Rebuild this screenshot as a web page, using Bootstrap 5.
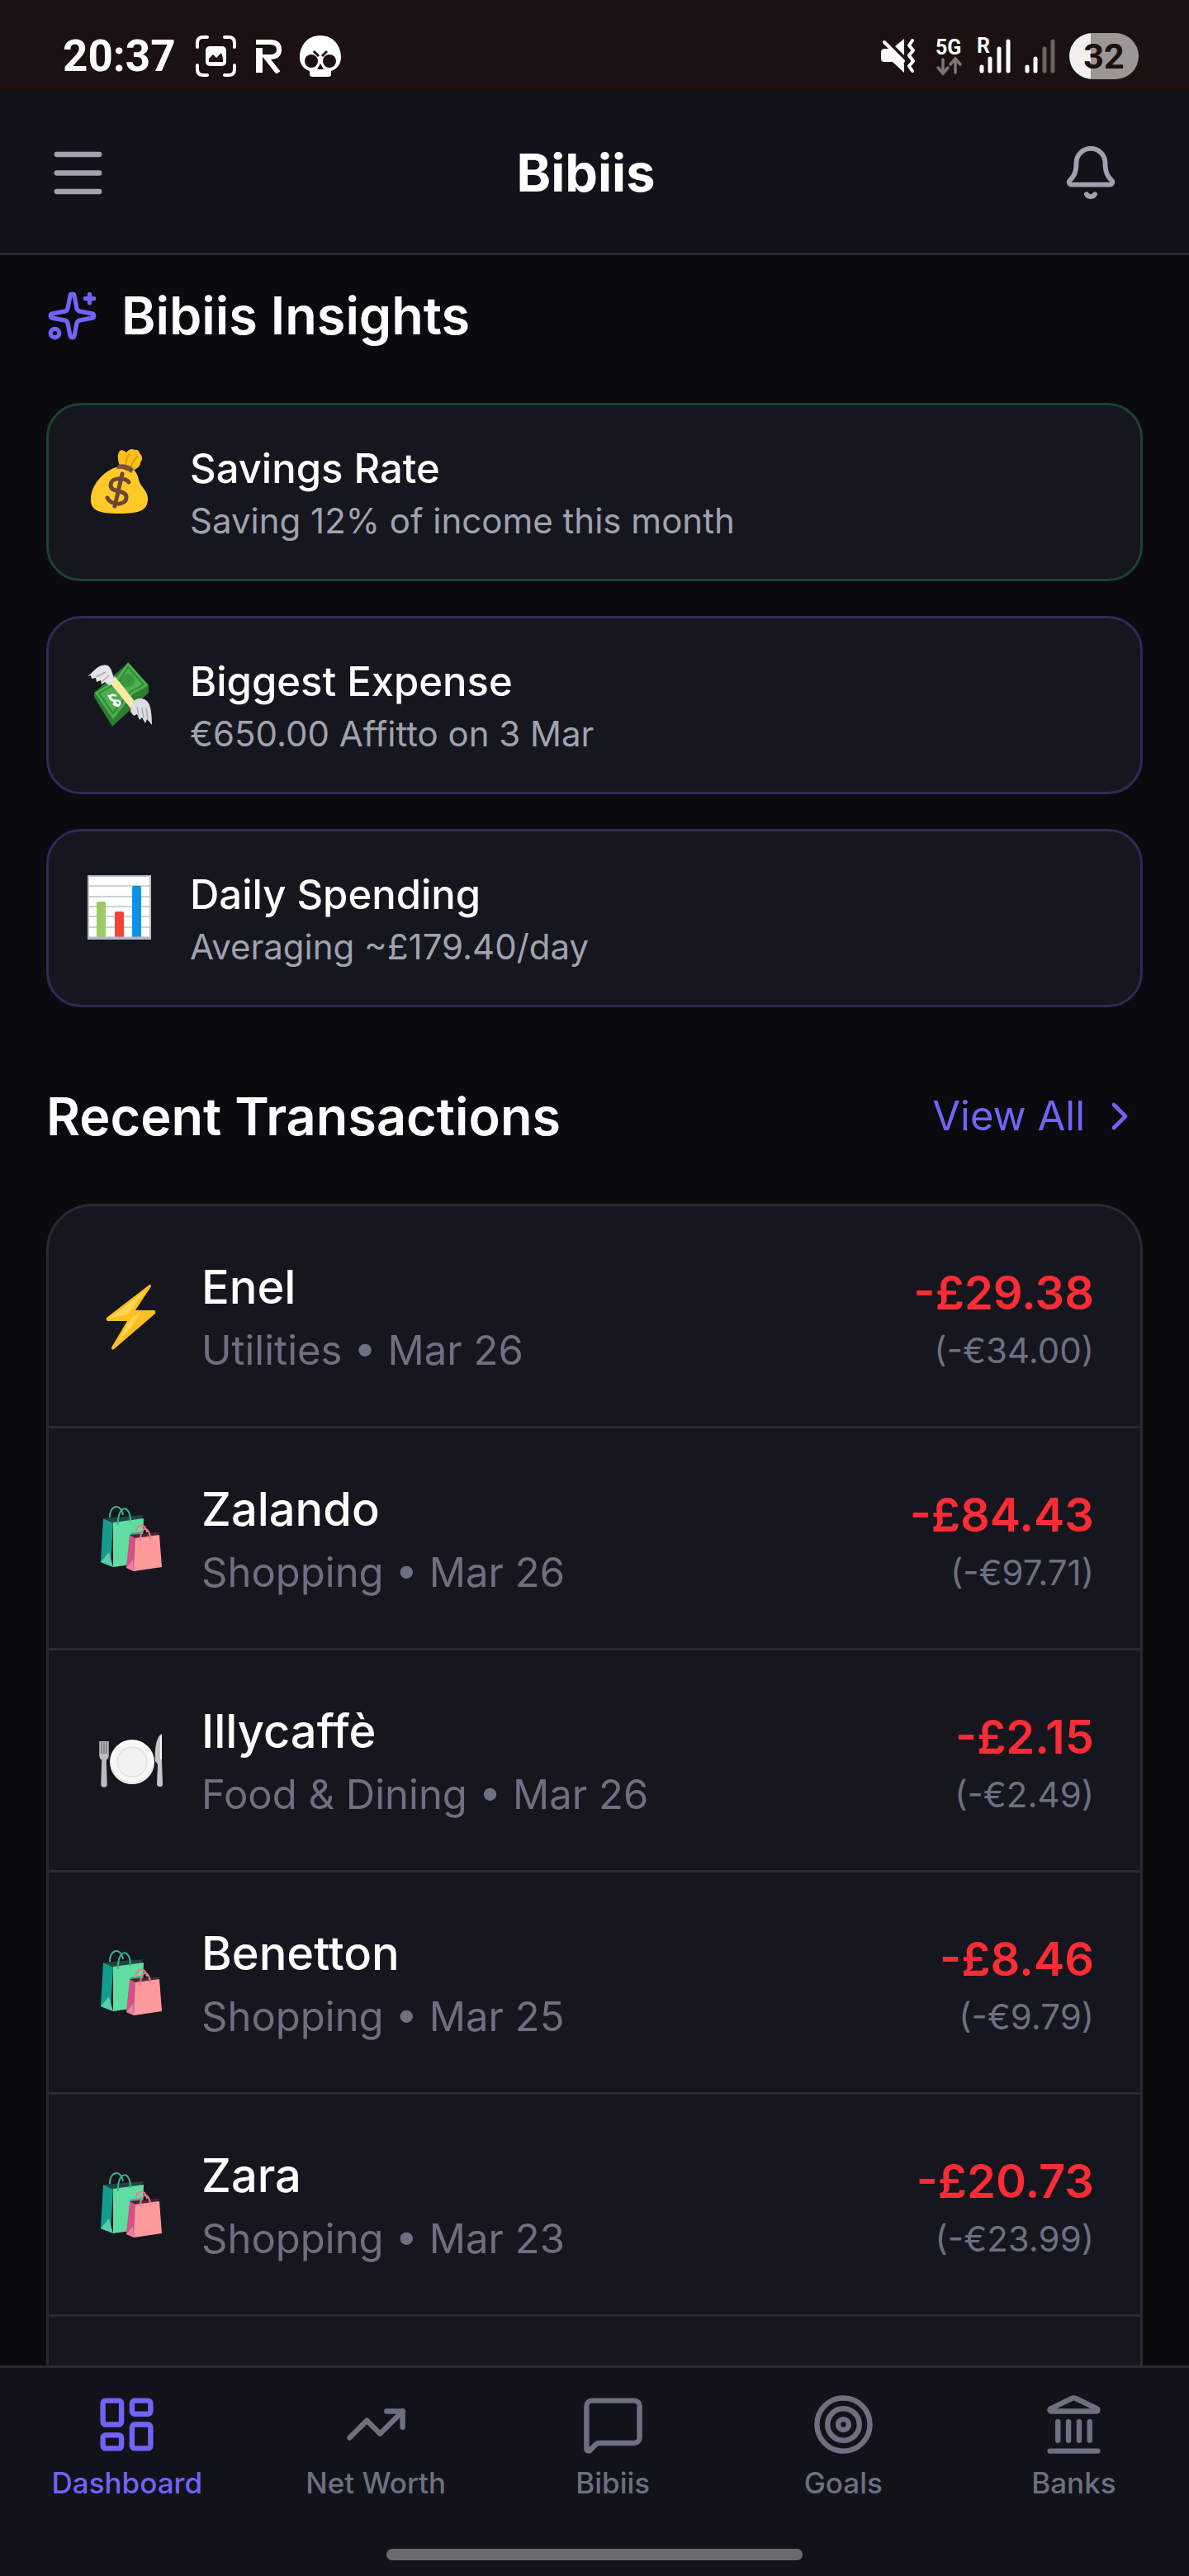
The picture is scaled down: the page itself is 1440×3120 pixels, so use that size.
<!DOCTYPE html>
<html lang="en">
<head>
<meta charset="utf-8">
<meta name="viewport" content="width=device-width, initial-scale=1">
<title>Bibiis</title>
<link href="https://cdn.jsdelivr.net/npm/bootstrap@5.3.0/dist/css/bootstrap.min.css" rel="stylesheet">
<style>
  :root { --page:#0a0a0f; --bar:#12131a; --panel:#16161e; --line:#2a2a34; --brand:#7064f7; --soft:#a0a2af; --dim:#6d7080; --loss:#fb2c36; }
  body { background:var(--page); color:#fff; font-family:Inter, "Liberation Sans", sans-serif; }
  svg { display:block; flex-shrink:0; }
  .stroke-icon { fill:none; stroke:currentColor; stroke-width:2; stroke-linecap:round; stroke-linejoin:round; }
  .status-bar { background:#1a1110; height:112px; padding:24px 61px 0 76px; font-family:Roboto, sans-serif; }
  .clock { font-size:53px; line-height:56px; font-weight:700; }
  .skull-icon { margin-left:20px; }
  .battery-pill { width:84px; height:56px; font-size:43px; line-height:56px; font-weight:700; color:#1a1110; background:linear-gradient(90deg,#f1f0f0 26px,#9c9695 26px); }
  .top-bar { background:var(--bar); border-bottom:3px solid var(--line); height:197px; padding:0 56px; }
  .bar-btn { background:none; border:0; padding:0; color:var(--soft); }
  .menu-btn { width:105px; }
  .bell-btn { padding:28px; }
  .bar-title { font-size:63px; line-height:90px; font-weight:700; }
  .feed { padding:28px 56px 0; min-height:0; scrollbar-width:none; }
  .section-title { font-size:63px; line-height:90px; font-weight:600; }
  .section-head { margin-bottom:61px; }
  .recent-head { margin-top:87px; }
  .brand-ink { color:var(--brand); }
  .insight-list { gap:42px; }
  .insight { --bs-card-border-radius:42px; --bs-card-bg:var(--panel); --bs-card-border-width:3px; --bs-card-border-color:#2f2a55; --bs-card-color:#fff; flex-direction:row; gap:42px; padding:42px; }
  .insight-good { --bs-card-border-color:#1a4331; }
  .insight-icon { margin-top:7px; }
  .insight-title { font-size:49px; line-height:70px; font-weight:500; }
  .insight-text { font-size:42px; line-height:56px; color:var(--soft); }
  .view-link { font-size:49px; line-height:70px; gap:14px; color:var(--brand); }
  .tx-panel { --bs-list-group-bg:var(--panel); --bs-list-group-color:#fff; background:var(--panel); border:3px solid var(--line); border-bottom:0; border-radius:56px 56px 0 0; }
  .tx-row { border:0; border-bottom:3px solid var(--line); background:none; padding:56px; gap:42px; }
  .tx-name { font-size:56px; line-height:84px; font-weight:500; }
  .tx-meta { font-size:49px; line-height:70px; color:var(--dim); }
  .tx-amount { font-size:56px; line-height:84px; font-weight:600; color:var(--loss); }
  .tx-orig { font-size:42px; line-height:56px; color:var(--dim); }
  .tab-bar { background:var(--bar); border-top:3px solid var(--line); padding:30px 0 19px; }
  .tab-item { min-width:210px; padding:0 28px; gap:7px; font-size:35px; line-height:50px; font-weight:500; color:var(--dim); }
  .tab-item.active { color:var(--brand); }
  .home-pill { width:35%; height:14px; background:#6b6a6f; margin:55px auto 0; }
</style>
</head>
<body>
<svg width="0" height="0" class="position-absolute" aria-hidden="true">
  <symbol id="em-bag" viewBox="0 0 87 87">
    <path d="M44 24C41 16 41 10 44 6c3-2 6 0 8 2 3-4 7-5 10-3 3-1 6 1 6 4 4 3 4 8 1 11 1 4-5 8-10 11z" fill="#fdc01c"/>
    <path d="M56 9c-3 5-5 10-5 16M66 12c-4 5-8 9-9 15" stroke="#e59a00" stroke-width="2" fill="none"/>
    <path d="M43 25c-15 3-34 20-34 40 0 13 9 17 34 17 24 0 35-3 35-18 0-10-9-14-11-23-1-6-4-12-10-14z" fill="#ffca28"/>
    <path d="M42 23c6-2 14 0 19 5l-3 5c-5-4-12-6-18-5z" fill="#7a5240"/>
    <path d="M55 44c-4-5-21-7-22 3-1 11 20 5 19 16-1 10-19 9-23 0M47 34 38 73" stroke="#6d4534" stroke-width="5" fill="none" stroke-linecap="round"/>
  </symbol>
  <symbol id="em-wings" viewBox="0 0 87 87">
    <path d="M54 5 79 33v8L35 82 13 46v-5z" fill="#2e7d32"/>
    <path d="M54 4 79 32 60 43 36 73 14 41 38 26z" fill="#4caf50"/>
    <path d="M54 10 73 31 57 40 36 66 19 42 41 29z" fill="none" stroke="#2e8b36" stroke-width="2"/>
    <ellipse cx="53" cy="26" rx="9" ry="8" fill="#3b9440"/>
    <path d="M38 21 61 50l-2 12L33 30z" fill="#ffe9a5"/>
    <path d="m30 44 13 14M40 45c-6-3-10 0-7 4s9-1 11 3-4 7-8 2" fill="none" stroke="#fff" stroke-width="2.500"/>
    <path d="M5 21C13 16 18 5 29 8c5 2 7 12 9 20l-7 4-5-4-4 3-1-5-5 2-1-5-5 1-1-4z" fill="#e4e5e8"/>
    <path d="M57 64c1-10 3-15 11-16 10 0 15 6 15 32l-6-7-2 5-4-7-3 3-3-7-4 2z" fill="#dcdde2"/>
    <path d="m15 22 12-6m-5 12 9-8M67 69l-2-11m8 14-2-13m7 14-2-13" stroke="#a9adb5" stroke-width="1.500" fill="none"/>
  </symbol>
  <symbol id="em-chart" viewBox="0 0 87 87">
    <path d="M5 4h77v78H5z" fill="#fff"/>
    <path d="M5 17h77M5 30h77M5 42h77M5 54h77M5 67h77" stroke="#cbd2d8" stroke-width="2"/>
    <path d="M6 5h75v76H6z" fill="none" stroke="#b4bec8" stroke-width="2"/>
    <path d="M16 80V38q0-2 2-2h7q2 0 2 2v42z" fill="#9ccc65"/>
    <path d="M38 80V50q0-2 2-2h7q2 0 2 2v30z" fill="#f44336"/>
    <path d="M59 80V19q0-2 2-2h7q2 0 2 2v61z" fill="#0c91eb"/>
    <path d="M5 80h77" stroke="#b0bac3" stroke-width="3"/>
  </symbol>
  <symbol id="em-bolt" viewBox="0 0 87 87">
    <path d="M66 5 14 45q-1 4 2 4h23L20 81q0 4 3 2L73 40q1-4-2-4H49L68 7q0-3-2-2z" fill="#fcbf21"/>
    <path d="M60 13 43 37q-1 3-5 4L17 46zM45 44l9-4-12 19-15 16z" fill="#ffe36b" opacity=".7"/>
  </symbol>
  <symbol id="em-shop" viewBox="0 0 87 87">
    <path d="m10 19 12 5-3 53L7 72z" fill="#159c8a"/>
    <path d="m10 19 49-4-4 6-33 4z" fill="#23433f"/>
    <path d="m22 24 37-5-2 54-35 5z" fill="#61dda2"/>
    <path d="M7 72 17 60l5 18z" fill="#5cc9b0"/>
    <path d="m43 37 14-2-2 42H38z" fill="#34a98a"/>
    <path d="M18 18C17 4 31-1 34 15M28 27C27 2 43 1 43 23" fill="none" stroke="#38b58d" stroke-width="2"/>
    <path d="m42 39 7 3-2 41-9-4z" fill="#d64f86"/>
    <path d="m42 39 36-3-3 5-26 2z" fill="#4c2737"/>
    <path d="m49 43 29-4 3 39-34 5z" fill="#ff9a9c"/>
    <path d="m38 79 8-10 1 14z" fill="#ea7f9f"/>
    <path d="M49 37c2-13 12-12 14-1M55 46c0-20 12-17 12-2" fill="none" stroke="#f0798c" stroke-width="2"/>
  </symbol>
  <symbol id="em-plate" viewBox="0 0 87 87">
    <path d="M6 20v17q0 4 3 5l-1 30q0 3 3 3t3-3l-1-30q3-1 3-5V20M9 20v16M13 20v16" fill="#b9bbbd" stroke="#b9bbbd" stroke-width="1.500"/>
    <path d="M8 21v14M11 21v14M14 21v14" stroke="#55585d" stroke-width="1"/>
    <path d="M81 11c-6 2-9 17-8 33l3 4-1 24q0 3 4 3 3 0 3-3l-1-28z" fill="#c5c6c8"/>
    <path d="M80 14v28" stroke="#f4f4f4" stroke-width="2"/>
    <circle cx="45" cy="45" r="27" fill="#f7f7f7"/>
    <circle cx="45" cy="45" r="18" fill="#f2f2f2" stroke="#e2e2e2" stroke-width="1.500"/>
    <path d="M20 52a26 26 0 0 0 50 0" fill="none" stroke="#e2e3e4" stroke-width="2"/>
  </symbol>
</svg>

<div class="vh-100 d-flex flex-column">
  <div class="status-bar d-flex align-items-center justify-content-between">
    <div class="d-flex align-items-center">
      <span class="clock">20:37</span>
      <svg class="ms-4" width="49" height="50" viewBox="0 0 49 50" aria-hidden="true"><path d="M2 14V9q0-7 7-7h5M35 2h5q7 0 7 7v5M47 36v5q0 7-7 7h-5M14 48H9q-7 0-7-7v-5" fill="none" stroke="#fff" stroke-width="4" stroke-linecap="round"/><rect x="12" y="13" width="25" height="24" rx="5" fill="#fff"/><path d="M16 32v-4l5-5 4 4 6-6 2 7v4z" fill="#1a1110"/></svg>
      <svg class="ms-4" width="32" height="42" viewBox="0 0 32 42" aria-hidden="true"><path d="M0 11h8v30H0z" fill="#fff"/><path d="M0 4h17q11 0 11 9t-11 9h-5l15 19" fill="none" stroke="#fff" stroke-width="6"/></svg>
      <svg class="skull-icon" width="52" height="50" viewBox="0 0 52 50" aria-hidden="true"><path d="M26 0c17 0 25 14 25 26 0 9-5 15-12 17v4q0 3-3 3H16q-3 0-3-3v-4C6 41 1 35 1 26 1 14 9 0 26 0z" fill="#fff"/><circle cx="15" cy="31" r="8" fill="#1a1110"/><circle cx="37" cy="31" r="8" fill="#1a1110"/><path d="m18 19 6 6M34 19l-6 6" stroke="#1a1110" stroke-width="3"/><path d="m26 34-4 7h8z" fill="#1a1110"/></svg>
    </div>
    <div class="d-flex align-items-center">
      <svg width="42" height="42" viewBox="0 0 42 42" aria-hidden="true"><path d="M0 16q0-4 5-4h5l18 18v11L14 28H4q-4 0-4-4z" fill="#fff"/><path d="M17 9 28 0v20z" fill="#fff"/><path d="m4 4 23 23" stroke="#fff" stroke-width="4" stroke-linecap="round"/><path d="m38 2-4 6 5 6-5 6 5 7-5 6 4 6" fill="none" stroke="#fff" stroke-width="4" stroke-linejoin="round" stroke-linecap="round"/></svg>
      <svg class="ms-4" width="34" height="62" viewBox="0 -8 34 62" role="img"><text x="0" y="21" font-size="25" font-weight="700" fill="#fff">5G</text><path d="M9 27v16M3 37l6 7 6-7M24 43V27M18 33l6-7 6 7" fill="none" stroke="#7f7775" stroke-width="3.500" stroke-linecap="round"/></svg>
      <svg class="ms-3" width="42" height="62" viewBox="0 -8 42 62" role="img"><text x="0" y="19" font-size="25" font-weight="700" fill="#fff">R</text><path d="M6 36v5M16 26v15M27 14v27M38 5v36" stroke="#fff" stroke-width="5" stroke-linecap="round"/></svg>
      <svg class="ms-3" width="38" height="46" viewBox="0 0 38 46" aria-hidden="true"><path d="M3 36v5M13 26v15" stroke="#fff" stroke-width="5" stroke-linecap="round"/><path d="M24 14v27M34 5v36" stroke="#6d6462" stroke-width="5" stroke-linecap="round"/></svg>
      <span class="battery-pill rounded-pill text-center ms-3">32</span>
    </div>
  </div>

  <header class="top-bar d-flex align-items-center justify-content-between">
    <button type="button" class="bar-btn menu-btn" aria-label="Menu"><svg class="stroke-icon" width="77" height="77" viewBox="0 0 24 24"><path d="M4 5h16M4 12h16M4 19h16"/></svg></button>
    <h1 class="bar-title m-0">Bibiis</h1>
    <button type="button" class="bar-btn bell-btn" aria-label="Notifications"><svg class="stroke-icon" width="70" height="70" viewBox="0 0 24 24"><path d="M10.268 21a2 2 0 0 0 3.464 0"/><path d="M3.262 15.326A1 1 0 0 0 4 17h16a1 1 0 0 0 .74-1.673C19.41 13.956 18 12.499 18 8A6 6 0 0 0 6 8c0 4.499-1.411 5.956-2.738 7.326"/></svg></button>
  </header>

  <main class="feed flex-grow-1 overflow-auto d-flex flex-column">
    <div class="section-head d-flex align-items-center">
      <svg class="stroke-icon brand-ink" width="63" height="63" viewBox="0 0 24 24" aria-hidden="true"><path d="M11.017 2.814a1 1 0 0 1 1.966 0l1.051 5.558a2 2 0 0 0 1.594 1.594l5.558 1.051a1 1 0 0 1 0 1.966l-5.558 1.051a2 2 0 0 0-1.594 1.594l-1.051 5.558a1 1 0 0 1-1.966 0l-1.051-5.558a2 2 0 0 0-1.594-1.594l-5.558-1.051a1 1 0 0 1 0-1.966l5.558-1.051a2 2 0 0 0 1.594-1.594z"/><path d="M20 2v4M22 4h-4"/><circle cx="4" cy="20" r="2"/></svg>
      <h2 class="section-title m-0 ps-4 ms-1">Bibiis Insights</h2>
    </div>

    <div class="insight-list d-flex flex-column">
      <article class="card insight insight-good">
        <svg class="insight-icon" width="87" height="87" aria-hidden="true"><use href="#em-bag"/></svg>
        <div><h3 class="insight-title m-0">Savings Rate</h3><p class="insight-text m-0">Saving 12% of income this month</p></div>
      </article>
      <article class="card insight">
        <svg class="insight-icon" width="87" height="87" aria-hidden="true"><use href="#em-wings"/></svg>
        <div><h3 class="insight-title m-0">Biggest Expense</h3><p class="insight-text m-0">€650.00 Affitto on 3 Mar</p></div>
      </article>
      <article class="card insight">
        <svg class="insight-icon" width="87" height="87" aria-hidden="true"><use href="#em-chart"/></svg>
        <div><h3 class="insight-title m-0">Daily Spending</h3><p class="insight-text m-0">Averaging ~£179.40/day</p></div>
      </article>
    </div>

    <div class="section-head recent-head d-flex align-items-center justify-content-between">
      <h2 class="section-title m-0">Recent Transactions</h2>
      <a href="#" class="view-link d-flex align-items-center text-decoration-none">View All <svg class="stroke-icon" width="56" height="56" viewBox="0 0 24 24" aria-hidden="true"><path d="m9 18 6-6-6-6"/></svg></a>
    </div>

    <ul class="list-group tx-panel flex-grow-1">
      <li class="list-group-item tx-row d-flex align-items-center">
        <svg width="87" height="87" aria-hidden="true"><use href="#em-bolt"/></svg>
        <div class="flex-grow-1"><div class="tx-name">Enel</div><div class="tx-meta">Utilities • Mar 26</div></div>
        <div class="text-end"><div class="tx-amount">-£29.38</div><div class="tx-orig">(-€34.00)</div></div>
      </li>
      <li class="list-group-item tx-row d-flex align-items-center">
        <svg width="87" height="87" aria-hidden="true"><use href="#em-shop"/></svg>
        <div class="flex-grow-1"><div class="tx-name">Zalando</div><div class="tx-meta">Shopping • Mar 26</div></div>
        <div class="text-end"><div class="tx-amount">-£84.43</div><div class="tx-orig">(-€97.71)</div></div>
      </li>
      <li class="list-group-item tx-row d-flex align-items-center">
        <svg width="87" height="87" aria-hidden="true"><use href="#em-plate"/></svg>
        <div class="flex-grow-1"><div class="tx-name">Illycaffè</div><div class="tx-meta">Food &amp; Dining • Mar 26</div></div>
        <div class="text-end"><div class="tx-amount">-£2.15</div><div class="tx-orig">(-€2.49)</div></div>
      </li>
      <li class="list-group-item tx-row d-flex align-items-center">
        <svg width="87" height="87" aria-hidden="true"><use href="#em-shop"/></svg>
        <div class="flex-grow-1"><div class="tx-name">Benetton</div><div class="tx-meta">Shopping • Mar 25</div></div>
        <div class="text-end"><div class="tx-amount">-£8.46</div><div class="tx-orig">(-€9.79)</div></div>
      </li>
      <li class="list-group-item tx-row d-flex align-items-center">
        <svg width="87" height="87" aria-hidden="true"><use href="#em-shop"/></svg>
        <div class="flex-grow-1"><div class="tx-name">Zara</div><div class="tx-meta">Shopping • Mar 23</div></div>
        <div class="text-end"><div class="tx-amount">-£20.73</div><div class="tx-orig">(-€23.99)</div></div>
      </li>
    </ul>
  </main>

  <nav class="tab-bar" aria-label="Main">
    <div class="d-flex justify-content-around">
      <a href="#" class="tab-item active d-flex flex-column align-items-center text-decoration-none" aria-current="page"><svg class="stroke-icon" width="77" height="77" viewBox="0 0 24 24" aria-hidden="true"><rect x="3" y="3" width="7" height="9" rx="1"/><rect x="14" y="3" width="7" height="5" rx="1"/><rect x="14" y="12" width="7" height="9" rx="1"/><rect x="3" y="16" width="7" height="5" rx="1"/></svg>Dashboard</a>
      <a href="#" class="tab-item d-flex flex-column align-items-center text-decoration-none"><svg class="stroke-icon" width="77" height="77" viewBox="0 0 24 24" aria-hidden="true"><path d="M16 7h6v6"/><path d="m22 7-8.500 8.500-5-5L2 17"/></svg>Net Worth</a>
      <a href="#" class="tab-item d-flex flex-column align-items-center text-decoration-none"><svg class="stroke-icon" width="77" height="77" viewBox="0 0 24 24" aria-hidden="true"><path d="M22 17a2 2 0 0 1-2 2H6.828a2 2 0 0 0-1.414.586l-2.202 2.202A.71.71 0 0 1 2 21.286V5a2 2 0 0 1 2-2h16a2 2 0 0 1 2 2z"/></svg>Bibiis</a>
      <a href="#" class="tab-item d-flex flex-column align-items-center text-decoration-none"><svg class="stroke-icon" width="77" height="77" viewBox="0 0 24 24" aria-hidden="true"><circle cx="12" cy="12" r="10"/><circle cx="12" cy="12" r="6"/><circle cx="12" cy="12" r="2"/></svg>Goals</a>
      <a href="#" class="tab-item d-flex flex-column align-items-center text-decoration-none"><svg class="stroke-icon" width="77" height="77" viewBox="0 0 24 24" aria-hidden="true"><path d="M10 18v-7M14 18v-7M18 18v-7M6 18v-7M3 22h18"/><path d="M11.120 2.198a2 2 0 0 1 1.760.006l7.866 3.847c.476.233.31.949-.22.949H3.474c-.53 0-.695-.716-.22-.949z"/></svg>Banks</a>
    </div>
    <div class="home-pill rounded-pill"></div>
  </nav>
</div>
<script src="https://cdn.jsdelivr.net/npm/bootstrap@5.3.0/dist/js/bootstrap.bundle.min.js"></script>
</body>
</html>
